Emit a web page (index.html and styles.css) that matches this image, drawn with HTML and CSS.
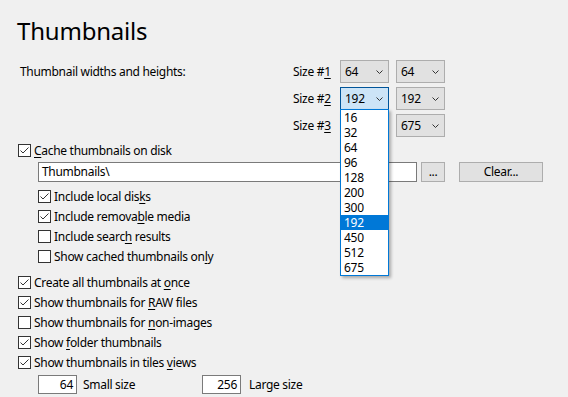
FILE: index.html
```html
<!DOCTYPE html>
<html lang="en">
<head>
    <meta charset="UTF-8">
    <title>Thumbnails</title>
    <link rel="stylesheet" href="styles.css">
</head>
<body>
<div class="page">
    <h1 class="title">Thumbnails</h1>

    <div class="sizes">
        <div class="sizes-label">Thumbnail widths and heights:</div>
        <div class="size-name">Size #<u>1</u></div>
        <div class="combo"><span>64</span><svg class="chev" width="7" height="4" viewBox="0 0 7 4"><path d="M0.5 0.5 L3.5 3.5 L6.5 0.5"/></svg></div>
        <div class="combo"><span>64</span><svg class="chev" width="7" height="4" viewBox="0 0 7 4"><path d="M0.5 0.5 L3.5 3.5 L6.5 0.5"/></svg></div>

        <div></div>
        <div class="size-name">Size #<u>2</u></div>
        <div class="combo combo-open"><span>192</span><svg class="chev" width="7" height="4" viewBox="0 0 7 4"><path d="M0.5 0.5 L3.5 3.5 L6.5 0.5"/></svg>
            <ul class="droplist">
                <li>16</li><li>32</li><li>64</li><li>96</li><li>128</li><li>200</li><li>300</li>
                <li class="picked">192</li><li>450</li><li>512</li><li>675</li>
            </ul>
        </div>
        <div class="combo"><span>192</span><svg class="chev" width="7" height="4" viewBox="0 0 7 4"><path d="M0.5 0.5 L3.5 3.5 L6.5 0.5"/></svg></div>

        <div></div>
        <div class="size-name">Size #<u>3</u></div>
        <div class="combo covered"><span>675</span><svg class="chev" width="7" height="4" viewBox="0 0 7 4"><path d="M0.5 0.5 L3.5 3.5 L6.5 0.5"/></svg></div>
        <div class="combo"><span>675</span><svg class="chev" width="7" height="4" viewBox="0 0 7 4"><path d="M0.5 0.5 L3.5 3.5 L6.5 0.5"/></svg></div>
    </div>

    <div class="check first">
        <span class="box on"><svg width="11" height="11" viewBox="0 0 11 11"><path d="M1.5 5.5 L4 8 L9.5 2.5"/></svg></span>
        <span class="txt"><u>C</u>ache thumbnails on disk</span>
    </div>

    <div class="path-row">
        <div class="field">Thumbnails\</div>
        <div class="btn btn-dots">...</div>
        <div class="btn btn-clear">Clear...</div>
    </div>

    <div class="sub">
        <div class="check">
            <span class="box on"><svg width="11" height="11" viewBox="0 0 11 11"><path d="M1.5 5.5 L4 8 L9.5 2.5"/></svg></span>
            <span class="txt">Include local dis<u>k</u>s</span>
        </div>
        <div class="check">
            <span class="box on"><svg width="11" height="11" viewBox="0 0 11 11"><path d="M1.5 5.5 L4 8 L9.5 2.5"/></svg></span>
            <span class="txt">Include remova<u>b</u>le media</span>
        </div>
        <div class="check">
            <span class="box"></span>
            <span class="txt">Include searc<u>h</u> results</span>
        </div>
        <div class="check">
            <span class="box"></span>
            <span class="txt">Show cached thumbnails on<u>l</u>y</span>
        </div>
    </div>

    <div class="main-opts">
        <div class="check">
            <span class="box on"><svg width="11" height="11" viewBox="0 0 11 11"><path d="M1.5 5.5 L4 8 L9.5 2.5"/></svg></span>
            <span class="txt">Create all thumbnails at <u>o</u>nce</span>
        </div>
        <div class="check">
            <span class="box on"><svg width="11" height="11" viewBox="0 0 11 11"><path d="M1.5 5.5 L4 8 L9.5 2.5"/></svg></span>
            <span class="txt">Show thumbnails for <u>R</u>AW files</span>
        </div>
        <div class="check">
            <span class="box"></span>
            <span class="txt">Show thumbnails for <u>n</u>on-images</span>
        </div>
        <div class="check">
            <span class="box on"><svg width="11" height="11" viewBox="0 0 11 11"><path d="M1.5 5.5 L4 8 L9.5 2.5"/></svg></span>
            <span class="txt">Show <u>f</u>older thumbnails</span>
        </div>
        <div class="check">
            <span class="box on"><svg width="11" height="11" viewBox="0 0 11 11"><path d="M1.5 5.5 L4 8 L9.5 2.5"/></svg></span>
            <span class="txt">Show thumbnails in tiles <u>v</u>iews</span>
        </div>
    </div>

    <div class="tile-row">
        <div class="num">64</div>
        <span class="num-label">Small size</span>
        <div class="num">256</div>
        <span class="num-label">Large size</span>
    </div>
</div>
</body>
</html>
```

FILE: styles.css
```css
body{
    margin:0;
    background:#f0f0f0;
    color:#000;
    font-family:"Noto Sans","Open Sans","DejaVu Sans",sans-serif;
    font-size:12px;
    letter-spacing:-0.3px;
}
.page{
    width:568px;
    height:397px;
    padding-left:18px;
    box-sizing:border-box;
    overflow:hidden;
}
.title{
    margin:0 0 0 -1px;
    padding-top:15px;
    height:31px;
    line-height:31px;
    font-size:24px;
    font-weight:normal;
    letter-spacing:-0.2px;
}
u{text-decoration-thickness:1px;text-underline-offset:2px;}

/* size combos */
.sizes{
    display:grid;
    grid-template-columns:266px 40px 49px 49px;
    grid-auto-rows:23px;
    column-gap:7px;
    row-gap:4px;
    margin-top:14px;
    margin-left:2px;
}
.sizes-label,.size-name{
    line-height:23px;
}
.combo{
    position:relative;
    display:flex;
    align-items:center;
    justify-content:space-between;
    padding:0 5px 0 4px;
    background:#e1e1e1;
    border:1px solid #adadad;
    box-sizing:border-box;
}
.combo.covered span{visibility:hidden;}
.chev path{
    fill:none;
    stroke:#333;
    stroke-width:1;
}
.combo-open{
    background:#cce4f7;
    border-color:#005499;
}
.droplist{
    position:absolute;
    left:-1px;
    top:21px;
    width:49px;
    margin:0;
    padding:0;
    list-style:none;
    background:#fff;
    border:1px solid #0078d7;
    box-sizing:border-box;
    box-shadow:2px 2px 3px rgba(0,0,0,.3);
    z-index:2;
}
.droplist li{
    height:15px;
    line-height:15px;
    padding-left:3px;
}
.droplist .picked{
    background:#0078d7;
    color:#fff;
}

/* checkboxes */
.check{
    display:flex;
    align-items:center;
    height:20px;
}
.check.first{margin-top:3px;}
.box{
    display:flex;
    align-items:center;
    justify-content:center;
    width:13px;
    height:13px;
    border:1px solid #333;
    background:#fff;
    box-sizing:border-box;
}
.box path{
    fill:none;
    stroke:#333;
    stroke-width:1;
}
.txt{margin-left:3px;}

.path-row{
    display:flex;
    margin:2px 0 0 20px;
    height:20px;
}
.field{
    width:379px;
    border:1px solid #7a7a7a;
    background:#fff;
    box-sizing:border-box;
    padding-left:3px;
    line-height:18px;
}
.btn{
    background:#e1e1e1;
    border:1px solid #adadad;
    box-sizing:border-box;
    text-align:center;
    line-height:18px;
}
.btn-dots{width:24px;margin-left:4px;}
.btn-clear{width:84px;margin-left:14px;}

.sub{
    margin:4px 0 0 20px;
}
.main-opts{
    margin-top:6px;
}

.tile-row{
    display:flex;
    align-items:center;
    margin:3px 0 0 20px;
    height:19px;
}
.num{
    width:39px;
    height:19px;
    border:1px solid #7a7a7a;
    background:#fff;
    box-sizing:border-box;
    text-align:right;
    padding-right:3px;
    line-height:17px;
}
.num-label{margin-left:6px;width:119px;}
.num-label:last-child{margin-left:8px;}
```
